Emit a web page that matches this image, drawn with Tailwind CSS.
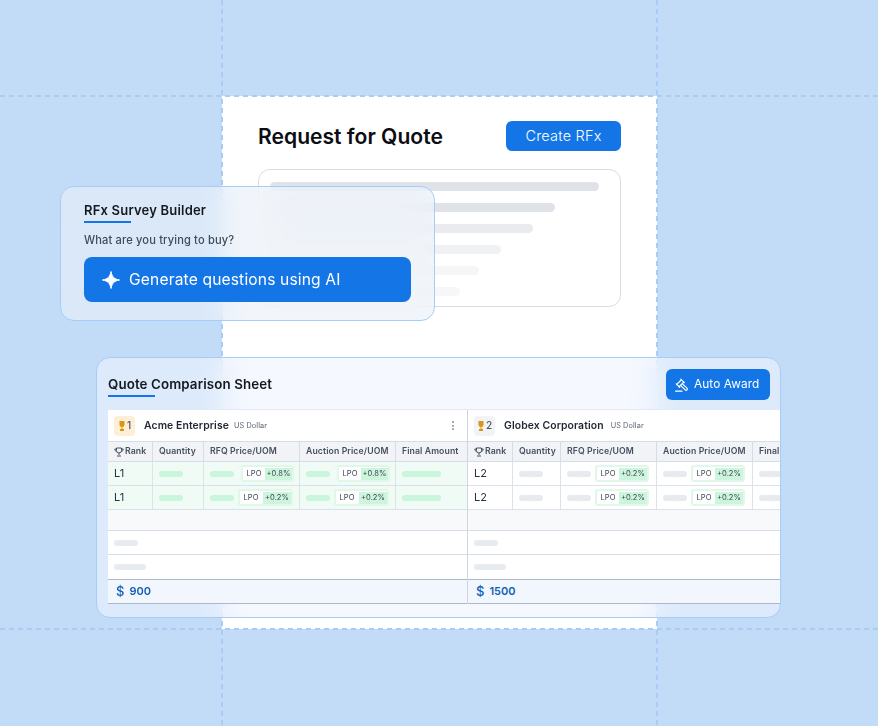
<!DOCTYPE html>
<html lang="en">
<head>
  <meta charset="UTF-8" />
  <title>Request for Quote</title>
  <script src="https://cdn.jsdelivr.net/npm/@tailwindcss/browser@4"></script>
</head>
<body class="font-['Inter',sans-serif]">
  <div class="relative w-[878px] h-[726px] overflow-hidden bg-[#c2dcf8]">
    <!-- request page -->
    <div class="absolute left-[222px] top-[96px] w-[435px] h-[533px] bg-white px-[36px] pt-[25px]">
      <div class="flex items-center justify-between h-[30px]">
        <h1 class="mt-[1px] text-[21.1px] font-semibold text-[#0b0d12]">Request for Quote</h1>
        <div class="w-[115px] h-[30px] rounded-[6px] bg-[#1476e6] flex items-center justify-center text-white text-[14.5px] font-light tracking-[0.2px]">Create RFx</div>
      </div>
      <div class="mt-[18px] w-[363px] h-[138px] rounded-[12px] border border-[#d5dde8] px-[11px] pt-[12px] flex flex-col gap-[12px]">
        <div class="w-[329px] h-[9px] rounded-full bg-[#dfe2e7]"></div>
        <div class="w-[285px] h-[9px] rounded-full bg-[#dfe2e7]"></div>
        <div class="w-[263px] h-[9px] rounded-full bg-[#e9ebef]"></div>
        <div class="w-[231px] h-[9px] rounded-full bg-[#eff1f3]"></div>
        <div class="w-[209px] h-[9px] rounded-full bg-[#f5f6f7]"></div>
        <div class="w-[190px] h-[9px] rounded-full bg-[#f6f7f8]"></div>
      </div>
    </div>

    <!-- guide lines -->
    <div class="absolute left-0 right-0 top-[95px] h-[2px] bg-[repeating-linear-gradient(90deg,#a9cbf6_0_5px,transparent_5px_9px)]"></div>
    <div class="absolute left-0 right-0 top-[628px] h-[2px] bg-[repeating-linear-gradient(90deg,#a9cbf6_0_5px,transparent_5px_9px)]"></div>
    <div class="absolute top-0 bottom-0 left-[221px] w-[2px] bg-[repeating-linear-gradient(180deg,#a9cbf6_0_5px,transparent_5px_9px)]"></div>
    <div class="absolute top-0 bottom-0 left-[656px] w-[2px] bg-[repeating-linear-gradient(180deg,#a9cbf6_0_5px,transparent_5px_9px)]"></div>

    <!-- survey builder card -->
    <div class="absolute left-[60px] top-[186px] w-[375px] h-[135px] rounded-[14px] border border-[#a6cdf8] bg-[#eaf0f8]/60 backdrop-blur-[14px] px-[23px] pt-[14px]">
      <div class="text-[13px] leading-[18px] font-semibold text-[#14181f] tracking-[0.2px]">RFx Survey Builder</div>
      <div class="mt-[2px] w-[47px] h-[2px] bg-[#1476e6]"></div>
      <div class="mt-[9px] text-[11.1px] leading-[16px] font-medium text-[#414a58] tracking-[0.15px]">What are you trying to buy?</div>
      <div class="mt-[9px] h-[45px] rounded-[8px] bg-[#1476e6] flex items-center pl-[18px] gap-[9px] text-white text-[15.6px] tracking-[0.15px]">
        <svg class="w-[18px] h-[18px]" viewBox="0 0 18 18" fill="#fff"><path d="M9 0.500c.9 5.300 3.200 7.600 8.500 8.500-5.300.9-7.600 3.200-8.500 8.500-.9-5.300-3.200-7.600-8.500-8.500 5.300-.9 7.600-3.200 8.500-8.500z" stroke="#fff" stroke-width="1" stroke-linejoin="round"/></svg>
        <span class="mt-[1px]">Generate questions using AI</span>
      </div>
    </div>

    <!-- comparison card -->
    <div class="absolute left-[96px] top-[357px] w-[685px] h-[261px] rounded-[14px] border border-[#a6cdf8] bg-[#eef4fe]/60 backdrop-blur-[14px] overflow-hidden">
      <div class="flex items-center justify-between h-[52px] pl-[11px] pr-[10px]">
        <div class="pt-[3px]">
          <div class="text-[13.35px] leading-[18px] font-semibold text-[#14181f] tracking-[0.1px]">Quote Comparison Sheet</div>
          <div class="mt-[2px] w-[47px] h-[2px] bg-[#1476e6]"></div>
        </div>
        <div class="flex items-center gap-[5px] w-[104px] h-[31px] mt-[1px] rounded-[6px] bg-[#1476e6] pl-[9px] text-white text-[11.8px] tracking-[0.1px]">
          <svg class="w-[14px] h-[14px]" viewBox="0 0 24 24" fill="none" stroke="#fff" stroke-width="2" stroke-linejoin="round" stroke-linecap="round"><g transform="matrix(-1 0 0 1 24 0)"><path d="m14.500 12.500-8 8a2.119 2.119 0 1 1-3-3l8-8"/><path d="m16 16 6-6"/><path d="m8 8 6-6"/><path d="m9 7 8 8"/><path d="m21 11-8-8"/></g><path d="M1 22.500h11"/></svg>
          <span>Auto Award</span>
        </div>
      </div>

      <div class="ml-[11px] flex w-[673px] h-[194px] bg-white text-[#2a3240] overflow-hidden shadow-[0_-1px_0_#e3e9f1]">
        <!-- Acme -->
        <div class="w-[360px] shrink-0 border-r border-[#cfd6df] flex flex-col">
          <div class="h-[31px] shrink-0 flex items-center pl-[6px] pr-[13px]">
            <div class="w-[21px] h-[20px] rounded-[4px] bg-[#fdeed8] flex items-center justify-center gap-[1px] text-[10px] font-medium text-[#4b5563]">
              <svg class="w-[8px] h-[10px]" viewBox="0 0 8 10" fill="#d9960f"><path d="M1.500 0h5v3.500a2.500 2.500 0 0 1-5 0zM3.500 6h1v2h-1zM2 8h4v2H2z"/></svg>1
            </div>
            <span class="ml-[9px] mt-[1px] text-[10.4px] font-semibold text-[#1f2733] tracking-[0.1px]">Acme Enterprise</span>
            <span class="ml-[5px] mt-[1px] text-[7.3px] text-[#59626f] tracking-[0.1px]">US Dollar</span>
            <span class="ml-auto flex flex-col gap-[1.500px]"><i class="block w-[2px] h-[2px] rounded-full bg-[#8a93a0]"></i><i class="block w-[2px] h-[2px] rounded-full bg-[#8a93a0]"></i><i class="block w-[2px] h-[2px] rounded-full bg-[#8a93a0]"></i></span>
          </div>
          <div class="grid grid-cols-[44px_51px_96px_96px_72px] h-[21px] shrink-0 bg-[#f1f3f7] border-y border-[#d5dde8] text-[8.7px] font-semibold text-[#475060] tracking-[0.1px]">
            <div class="flex items-center pl-[6px] gap-[1px]"><svg class="w-[10px] h-[10px]" viewBox="0 0 10 10" fill="none" stroke="#475060"><path d="M2.500 1h5v2.500a2.500 2.500 0 0 1-5 0zM2.500 2H.8c0 1.500.7 2.300 1.900 2.500M7.500 2h1.700c0 1.500-.7 2.300-1.900 2.500M5 6v2M3 9h4"/></svg>Rank</div>
            <div class="flex items-center pl-[6px] border-l border-[#d5dde8]">Quantity</div>
            <div class="flex items-center pl-[6px] border-l border-[#d5dde8]">RFQ Price/UOM</div>
            <div class="flex items-center pl-[6px] border-l border-[#d5dde8]">Auction Price/UOM</div>
            <div class="flex items-center pl-[6px] border-l border-[#d5dde8]">Final Amount</div>
          </div>
          <div class="grid grid-cols-[44px_51px_96px_96px_72px] h-[24px] shrink-0 bg-[#f0fbf5] border-b border-[#d9e2ea] text-[11px]">
            <div class="flex items-center pl-[6px]">L1</div>
            <div class="flex items-center pl-[6px] border-l border-[#dbe4ea]"><i class="block w-[24px] h-[6px] rounded-full bg-[#c9f5dd]"></i></div>
            <div class="flex items-center pl-[6px] border-l border-[#dbe4ea]"><i class="block w-[24px] h-[6px] rounded-full bg-[#c9f5dd]"></i>
              <span class="ml-auto mr-[5px] flex items-center justify-between w-[53px] h-[17px] pl-[3.500px] rounded-[3px] bg-white border-2 border-[#e0f7ea] text-[7.6px] text-[#3f4856]">LPO<b class="font-normal bg-[#cdf5de] h-[12px] w-[27px] flex items-center justify-center">+0.8%</b></span></div>
            <div class="flex items-center pl-[6px] border-l border-[#dbe4ea]"><i class="block w-[24px] h-[6px] rounded-full bg-[#c9f5dd]"></i>
              <span class="ml-auto mr-[5px] flex items-center justify-between w-[53px] h-[17px] pl-[3.500px] rounded-[3px] bg-white border-2 border-[#e0f7ea] text-[7.6px] text-[#3f4856]">LPO<b class="font-normal bg-[#cdf5de] h-[12px] w-[27px] flex items-center justify-center">+0.8%</b></span></div>
            <div class="flex items-center pl-[6px] border-l border-[#dbe4ea]"><i class="block w-[39px] h-[6px] rounded-full bg-[#c9f5dd]"></i></div>
          </div>
          <div class="grid grid-cols-[44px_51px_96px_96px_72px] h-[24px] shrink-0 bg-[#f0fbf5] border-b border-[#d9e2ea] text-[11px]">
            <div class="flex items-center pl-[6px]">L1</div>
            <div class="flex items-center pl-[6px] border-l border-[#dbe4ea]"><i class="block w-[24px] h-[6px] rounded-full bg-[#c9f5dd]"></i></div>
            <div class="flex items-center pl-[6px] border-l border-[#dbe4ea]"><i class="block w-[24px] h-[6px] rounded-full bg-[#c9f5dd]"></i>
              <span class="ml-auto mr-[6px] flex items-center justify-between w-[55px] h-[17px] pl-[3.500px] rounded-[3px] bg-white border-2 border-[#e0f7ea] text-[7.6px] text-[#3f4856]">LPO<b class="font-normal bg-[#cdf5de] h-[12px] w-[28px] flex items-center justify-center">+0.2%</b></span></div>
            <div class="flex items-center pl-[6px] border-l border-[#dbe4ea]"><i class="block w-[24px] h-[6px] rounded-full bg-[#c9f5dd]"></i>
              <span class="ml-auto mr-[6px] flex items-center justify-between w-[55px] h-[17px] pl-[3.500px] rounded-[3px] bg-white border-2 border-[#e0f7ea] text-[7.6px] text-[#3f4856]">LPO<b class="font-normal bg-[#cdf5de] h-[12px] w-[28px] flex items-center justify-center">+0.2%</b></span></div>
            <div class="flex items-center pl-[6px] border-l border-[#dbe4ea]"><i class="block w-[39px] h-[6px] rounded-full bg-[#c9f5dd]"></i></div>
          </div>
          <div class="h-[21px] shrink-0 bg-[#f8f9fb] border-b border-[#d5dde8]"></div>
          <div class="h-[24px] shrink-0 border-b border-[#d5dde8] flex items-center pl-[6px]"><i class="block w-[24px] h-[6px] rounded-full bg-[#e7eaee]"></i></div>
          <div class="h-[24px] shrink-0 flex items-center pl-[6px]"><i class="block w-[32px] h-[6px] rounded-full bg-[#e7eaee]"></i></div>
          <div class="h-[25px] shrink-0 bg-[#f2f6fd] border-y border-[#aeb8c6] flex items-center pl-[8px] gap-[5px] text-[11px] font-semibold text-[#125fb8]"><span class="text-[13px] font-medium">$</span>900</div>
        </div>
        <!-- Globex -->
        <div class="w-[313px] shrink-0 flex flex-col overflow-hidden">
          <div class="h-[31px] shrink-0 flex items-center pl-[6px]">
            <div class="w-[21px] h-[20px] rounded-[4px] bg-[#f1f3f6] flex items-center justify-center gap-[1px] text-[10px] font-medium text-[#4b5563]">
              <svg class="w-[8px] h-[10px]" viewBox="0 0 8 10" fill="#d9960f"><path d="M1.500 0h5v3.500a2.500 2.500 0 0 1-5 0zM3.500 6h1v2h-1zM2 8h4v2H2z"/></svg>2
            </div>
            <span class="ml-[9px] mt-[1px] text-[10.4px] font-semibold text-[#1f2733] tracking-[0.1px]">Globex Corporation</span>
            <span class="ml-[7px] mt-[1px] text-[7.3px] text-[#59626f] tracking-[0.1px]">US Dollar</span>
          </div>
          <div class="grid grid-cols-[44px_48px_96px_96px_29px] h-[21px] shrink-0 bg-[#f1f3f7] border-y border-[#d5dde8] text-[8.7px] font-semibold text-[#475060] tracking-[0.1px] whitespace-nowrap">
            <div class="flex items-center pl-[6px] gap-[1px]"><svg class="w-[10px] h-[10px]" viewBox="0 0 10 10" fill="none" stroke="#475060"><path d="M2.500 1h5v2.500a2.500 2.500 0 0 1-5 0zM2.500 2H.8c0 1.500.7 2.300 1.900 2.500M7.500 2h1.700c0 1.500-.7 2.300-1.900 2.500M5 6v2M3 9h4"/></svg>Rank</div>
            <div class="flex items-center pl-[6px] border-l border-[#d5dde8]">Quantity</div>
            <div class="flex items-center pl-[6px] border-l border-[#d5dde8]">RFQ Price/UOM</div>
            <div class="flex items-center pl-[6px] border-l border-[#d5dde8]">Auction Price/UOM</div>
            <div class="flex items-center pl-[6px] border-l border-[#d5dde8] overflow-hidden">Final</div>
          </div>
          <div class="grid grid-cols-[44px_48px_96px_96px_29px] h-[24px] shrink-0 border-b border-[#d9e2ea] text-[11px]">
            <div class="flex items-center pl-[6px]">L2</div>
            <div class="flex items-center pl-[6px] border-l border-[#dbe4ea]"><i class="block w-[24px] h-[6px] rounded-full bg-[#e7eaee]"></i></div>
            <div class="flex items-center pl-[6px] border-l border-[#dbe4ea]"><i class="block w-[24px] h-[6px] rounded-full bg-[#e7eaee]"></i>
              <span class="ml-auto mr-[7px] flex items-center justify-between w-[54px] h-[17px] pl-[3.500px] rounded-[3px] bg-white border-2 border-[#e0f7ea] text-[7.6px] text-[#3f4856]">LPO<b class="font-normal bg-[#cdf5de] h-[12px] w-[28px] flex items-center justify-center">+0.2%</b></span></div>
            <div class="flex items-center pl-[6px] border-l border-[#dbe4ea]"><i class="block w-[24px] h-[6px] rounded-full bg-[#e7eaee]"></i>
              <span class="ml-auto mr-[7px] flex items-center justify-between w-[54px] h-[17px] pl-[3.500px] rounded-[3px] bg-white border-2 border-[#e0f7ea] text-[7.6px] text-[#3f4856]">LPO<b class="font-normal bg-[#cdf5de] h-[12px] w-[28px] flex items-center justify-center">+0.2%</b></span></div>
            <div class="flex items-center pl-[6px] border-l border-[#dbe4ea] overflow-hidden"><i class="block w-[39px] h-[6px] shrink-0 rounded-full bg-[#e7eaee]"></i></div>
          </div>
          <div class="grid grid-cols-[44px_48px_96px_96px_29px] h-[24px] shrink-0 border-b border-[#d9e2ea] text-[11px]">
            <div class="flex items-center pl-[6px]">L2</div>
            <div class="flex items-center pl-[6px] border-l border-[#dbe4ea]"><i class="block w-[24px] h-[6px] rounded-full bg-[#e7eaee]"></i></div>
            <div class="flex items-center pl-[6px] border-l border-[#dbe4ea]"><i class="block w-[24px] h-[6px] rounded-full bg-[#e7eaee]"></i>
              <span class="ml-auto mr-[7px] flex items-center justify-between w-[54px] h-[17px] pl-[3.500px] rounded-[3px] bg-white border-2 border-[#e0f7ea] text-[7.6px] text-[#3f4856]">LPO<b class="font-normal bg-[#cdf5de] h-[12px] w-[28px] flex items-center justify-center">+0.2%</b></span></div>
            <div class="flex items-center pl-[6px] border-l border-[#dbe4ea]"><i class="block w-[24px] h-[6px] rounded-full bg-[#e7eaee]"></i>
              <span class="ml-auto mr-[7px] flex items-center justify-between w-[54px] h-[17px] pl-[3.500px] rounded-[3px] bg-white border-2 border-[#e0f7ea] text-[7.6px] text-[#3f4856]">LPO<b class="font-normal bg-[#cdf5de] h-[12px] w-[28px] flex items-center justify-center">+0.2%</b></span></div>
            <div class="flex items-center pl-[6px] border-l border-[#dbe4ea] overflow-hidden"><i class="block w-[39px] h-[6px] shrink-0 rounded-full bg-[#e7eaee]"></i></div>
          </div>
          <div class="h-[21px] shrink-0 bg-[#f8f9fb] border-b border-[#d5dde8]"></div>
          <div class="h-[24px] shrink-0 border-b border-[#d5dde8] flex items-center pl-[6px]"><i class="block w-[24px] h-[6px] rounded-full bg-[#e7eaee]"></i></div>
          <div class="h-[24px] shrink-0 flex items-center pl-[6px]"><i class="block w-[32px] h-[6px] rounded-full bg-[#e7eaee]"></i></div>
          <div class="h-[25px] shrink-0 bg-[#f2f6fd] border-y border-[#aeb8c6] flex items-center pl-[8px] gap-[5px] text-[11px] font-semibold text-[#125fb8]"><span class="text-[13px] font-medium">$</span>1500</div>
        </div>
      </div>
    </div>
  </div>
</body>
</html>
